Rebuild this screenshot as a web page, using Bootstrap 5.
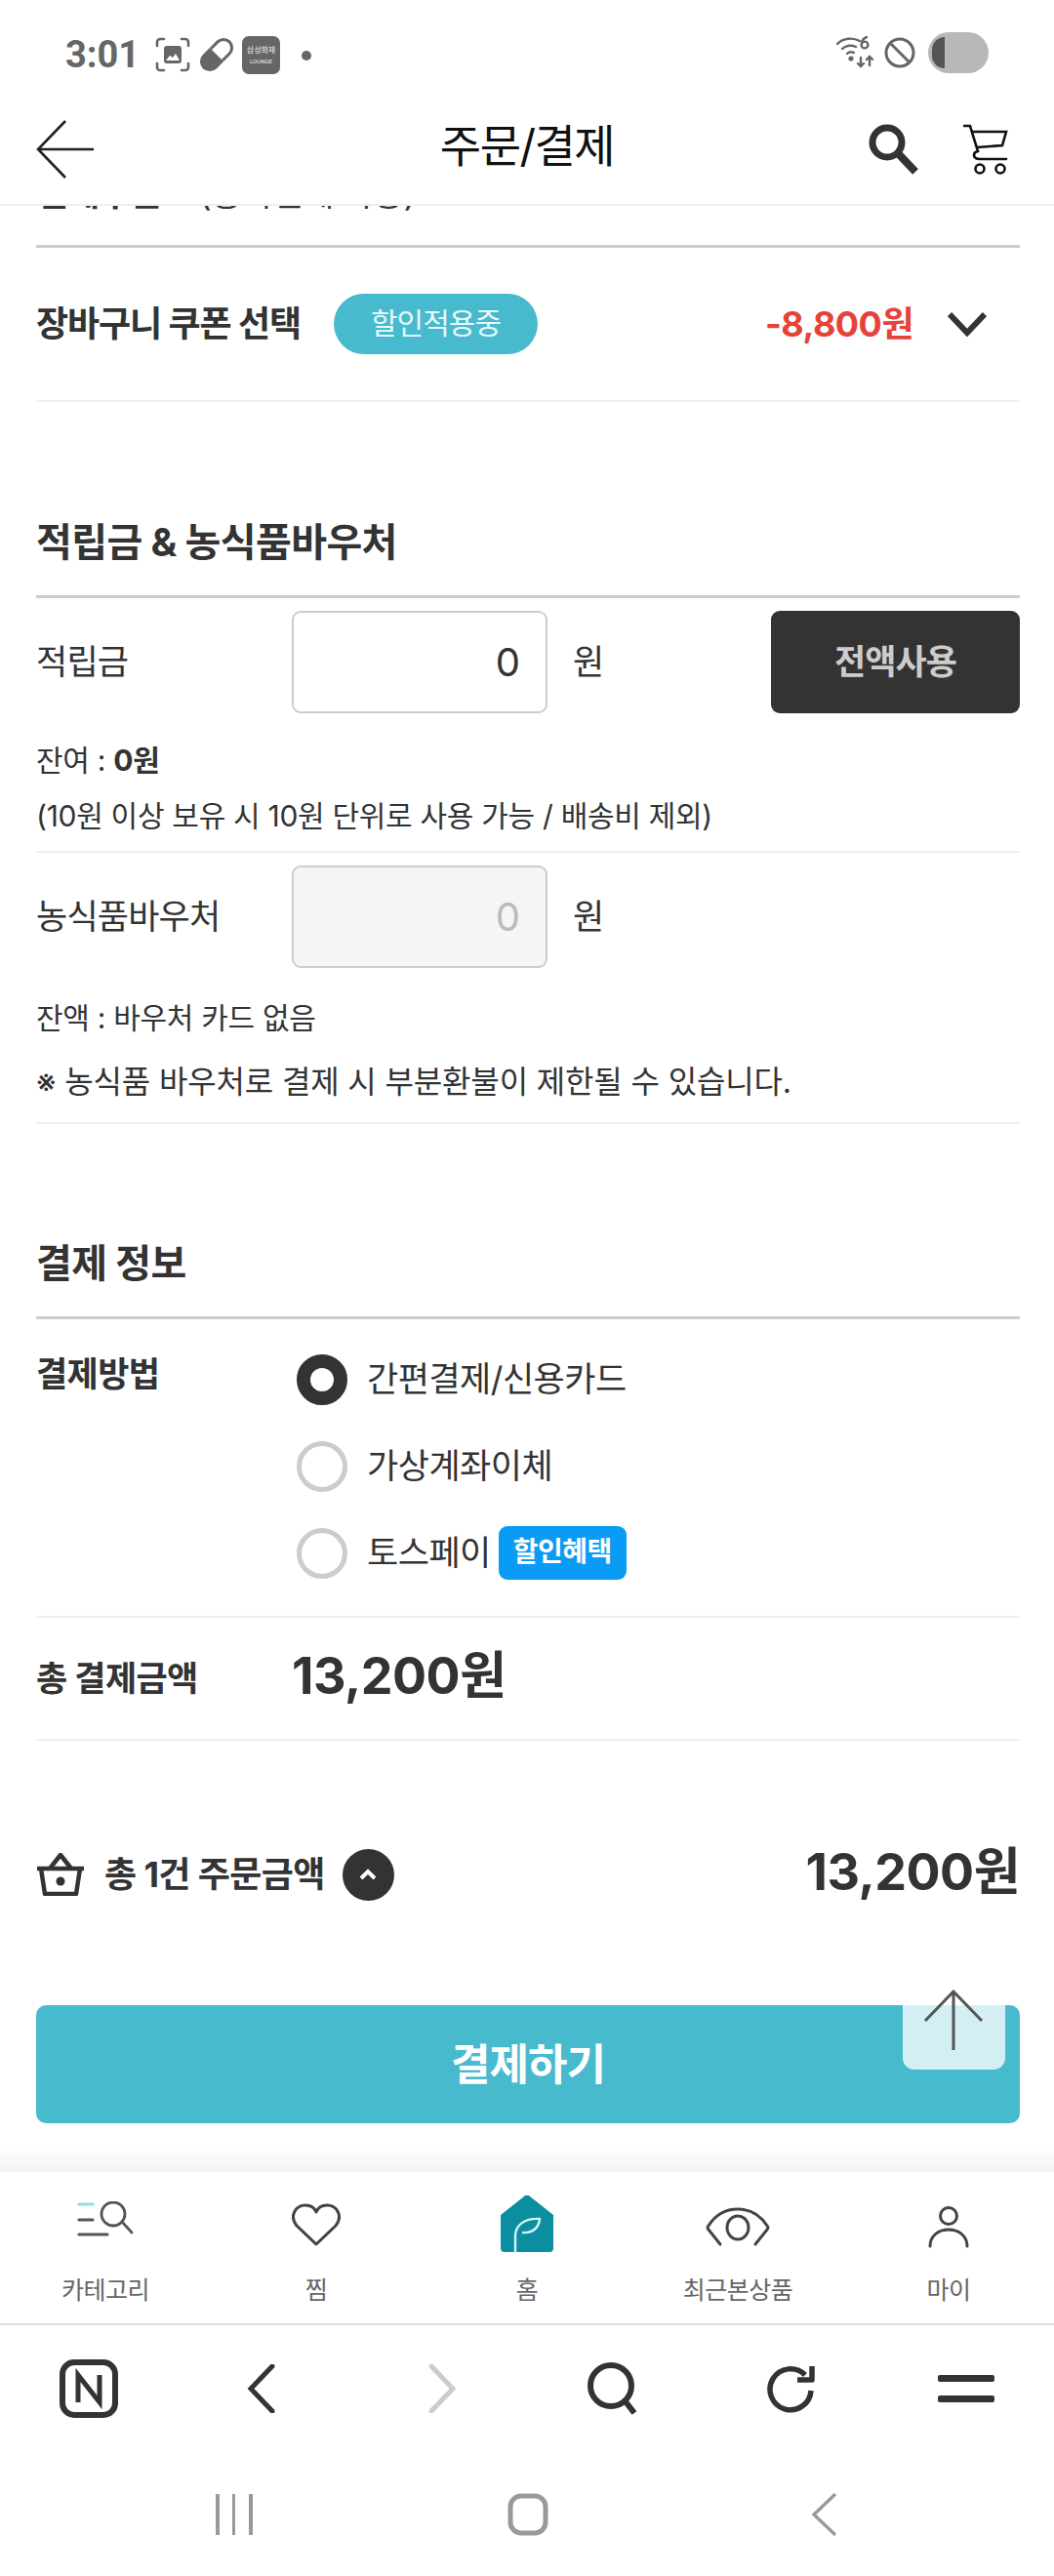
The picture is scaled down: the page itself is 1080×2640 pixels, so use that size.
<!DOCTYPE html>
<html lang="ko">
<head>
    <meta charset="UTF-8">
    <meta name="viewport" content="width=device-width, initial-scale=1.0">
    <title>주문/결제</title>
    <link href="https://cdn.jsdelivr.net/npm/bootstrap@5.3.0/dist/css/bootstrap.min.css" rel="stylesheet">
    <style>
        html, body { height: 2640px; }
        body {
            width: 1080px;
            background: #fff;
            color: #333;
            font-family: Inter, "Noto Sans CJK KR", "Noto Sans", sans-serif;
            font-size: 35px;
            letter-spacing: -.8px;
            overflow: hidden;
        }
        .status-bar { height: 100px; padding: 34px 67px 0 67px; color: #666; }
        .status-time { font-family: Roboto, sans-serif; font-weight: 700; font-size: 38px; line-height: 44px; letter-spacing: 0; width: 88px; }
        .top-head { height: 111px; border-bottom: 2px solid #eee; padding: 0 37px; position: relative; }
        .top-title { position: absolute; left: 0; right: 0; top: 19px; text-align: center; font-size: 46px; line-height: 60px; color: #111; letter-spacing: -1.5px; }
        .main-area { height: 2015px; overflow: hidden; padding: 0 35px 0 37px; position: relative; }
        .cut-head { height: 78px; margin-top: -38px; font-size: 36px; font-weight: 700; line-height: 50px; }
        .cut-head span { font-size: 35px; font-weight: 400; margin-left: 30px; }
        .rule-strong { border-top: 3px solid #ccc; }
        .rule-thin { border-top: 2px solid #eee; }
        .coupon-row { height: 156px; }
        .coupon-title { font-size: 36px; font-weight: 700; width: 305px; line-height: 50px; letter-spacing: -1.1px; }
        .coupon-pill { background: #47bace; color: #e8f8fb; border-radius: 31px; width: 209px; height: 62px; font-size: 30px; line-height: 60px; text-align: center; letter-spacing: -1px; }
        .minus-price { color: #e5433a; font-size: 36px; font-weight: 700; margin-right: 35px; letter-spacing: -.5px; }
        .sec-title { font-size: 40px; font-weight: 700; line-height: 56px; letter-spacing: -.6px; }
        .sec-one { padding-top: 116px; height: 198px; }
        .sec-two { padding-top: 115px; height: 197px; }
        .label-col { width: 262px; flex: none; }
        .field-row { height: 105px; margin-top: 13px; }
        .amount-input.form-control {
            width: 262px; height: 105px; border: 2px solid #ccc; border-radius: 9px;
            text-align: right; font-size: 40px; padding: 0 26px; color: #333; letter-spacing: 0;
            font-family: Inter, "Noto Sans CJK KR", sans-serif; box-shadow: none;
        }
        .amount-input.form-control:disabled { background: #f5f5f5; color: #bbb; opacity: 1; }
        .won-text { margin-left: 26px; }
        .all-btn.btn { width: 255px; height: 105px; margin-left: auto; background: #333; border: 0; border-radius: 9px; color: #ccc; font-size: 35px; font-weight: 700; letter-spacing: -1px; }
        .note-line { font-size: 30px; line-height: 40px; letter-spacing: -.3px; }
        .note-wide { font-size: 32px; margin-top: 26px; letter-spacing: -.15px; }
        .pay-methods { padding-top: 17px; height: 304px; }
        .pay-label { font-size: 35px; font-weight: 700; line-height: 48px; letter-spacing: -.6px; }
        .pay-opt { height: 89px; margin: 0; padding: 0; min-height: 0; }
        .pay-opt .form-check-input {
            width: 52px; height: 52px; margin: 0 20px 0 5px; float: none; flex: none;
            border: 5px solid #ccc; background-image: none; box-shadow: none;
        }
        .pay-opt .form-check-input:checked { border: 14px solid #333; background-color: #fff; background-image: none; }
        .pay-opt .form-check-label { font-size: 35px; letter-spacing: -.5px; opacity: 1; }
        .benefit-tag { background: #0a9bf5; color: #fff; border-radius: 9px; width: 131px; height: 55px; margin-left: 8px; font-size: 28px; font-weight: 700; line-height: 52px; text-align: center; letter-spacing: -.5px; }
        .total-row { height: 124px; }
        .total-big { font-size: 52px; font-weight: 700; letter-spacing: -.5px; line-height: 70px; margin-top: -5px; }
        .order-row { height: 122px; margin-top: 76px; }
        .order-label { font-size: 36px; font-weight: 700; margin: 0 18px 0 20px; letter-spacing: -.6px; }
        .toggle-dot { width: 53px; height: 53px; border-radius: 50%; background: #333; }
        .pay-btn.btn { display: block; width: 100%; height: 121px; margin-top: 73px; background: #47bace; border: 0; border-radius: 10px; color: #fff; font-size: 44px; font-weight: 700; letter-spacing: -1px; }
        .scroll-top { position: absolute; left: 925px; top: 1805px; width: 105px; height: 105px; background: rgba(255,255,255,.77); border-radius: 0 0 12px 12px; }
        .bottom-fade { height: 26px; margin-top: -26px; position: relative; background: linear-gradient(to bottom, rgba(0,0,0,0), rgba(0,0,0,.05)); }
        .tab-bar { height: 157px; border-bottom: 2px solid #ddd; }
        .tab-item { width: 216px; text-align: center; }
        .tab-icon { height: 76px; margin-top: 16px; }
        .tab-text { font-size: 25px; line-height: 34px; color: #666; margin-top: 12px; letter-spacing: -.5px; }
        .browser-bar { height: 130px; }
        .sys-bar { height: 127px; }
        .pos-b { position: absolute; top: 50%; transform: translate(-50%,-50%); }
    </style>
</head>
<body class="d-flex flex-column">
    <div class="status-bar d-flex align-items-start">
        <div class="status-time">3:01</div>
        <svg class="ms-1" width="36" height="36" viewBox="0 0 36 36" fill="none" stroke="#666" stroke-width="2.6" stroke-linecap="round" style="margin-top:4px">
            <path d="M2 9V5a3 3 0 0 1 3-3h4M27 2h4a3 3 0 0 1 3 3v4M34 27v4a3 3 0 0 1-3 3h-4M9 34H5a3 3 0 0 1-3-3v-4"/>
            <rect x="9" y="9" width="18" height="18" rx="3" fill="#666" stroke="none"/>
            <path d="M11 24l4-5 3 2 3-4 4 7z" fill="#fff" stroke="none"/>
        </svg>
        <svg class="ms-2" width="38" height="38" viewBox="0 0 38 38" style="margin-top:3px">
            <g transform="rotate(-45 19 19)"><path d="M19 9H9a10 10 0 0 0 0 20h10z" fill="#666"/><path d="M19 10.500h10a8.500 8.500 0 0 1 0 17H19" fill="none" stroke="#666" stroke-width="3"/></g>
        </svg>
        <div class="d-flex flex-column align-items-center justify-content-center" style="width:39px;height:39px;margin-left:7px;background:#666;border-radius:7px;margin-top:3px;color:#eee;font-size:8px;line-height:11px;letter-spacing:0">
            <span>삼성화재</span><span style="font-size:6px;font-family:Roboto">LOUNGE</span>
        </div>
        <div class="rounded-circle" style="width:10px;height:10px;background:#666;margin:18px 0 0 22px"></div>
        <div class="d-flex align-items-start ms-auto">
            <svg width="42" height="34" viewBox="0 0 40 34" fill="none" stroke="#666" stroke-width="2.4" stroke-linecap="round" style="margin-top:3px">
                <path d="M1 8C7 2 17 1 24 5M6 13c4-4 10-4 14-2M11 18c2-2 5-2 7-1"/><circle cx="15" cy="23" r="1.4" fill="#666"/>
                <circle cx="29" cy="9" r="3.4"/><path d="M26 8c0-4 2-6 5-7M25 22v9m-3-3l3 3 3-3M34 30v-9m-3 3l3-3 3 3"/>
            </svg>
            <svg class="ms-2" width="32" height="32" viewBox="0 0 32 32" fill="none" stroke="#666" stroke-width="3" style="margin-top:4px"><circle cx="16" cy="16" r="14"/><path d="M6 6l20 20"/></svg>
            <div class="d-flex align-items-center" style="width:62px;height:42px;margin-left:13px;background:#b8b8b8;border-radius:21px;margin-top:-1px;padding-left:4px">
                <div style="width:13px;height:32px;background:#555;border-radius:13px 0 0 13px"></div>
            </div>
        </div>
    </div>

    <div class="top-head d-flex align-items-center">
        <svg width="60" height="60" viewBox="0 0 60 60" fill="none" stroke="#222" stroke-width="2.6" style="margin-top:-4px">
            <path d="M30 1L2 30l28 29M2 30h57"/>
        </svg>
        <div class="top-title">주문/결제</div>
        <svg width="56" height="58" viewBox="0 0 56 58" fill="none" stroke="#333" style="position:absolute;left:887px;top:24px">
            <circle cx="22" cy="22" r="15" stroke-width="7"/><path d="M33 33l18 19" stroke-width="8"/>
        </svg>
        <svg width="48" height="52" viewBox="0 0 48 52" fill="none" stroke="#111" stroke-width="2.6" stroke-linecap="round" style="position:absolute;left:987px;top:27px">
            <path d="M1 2h6l8 26c-5 1-6 7 1 8h28M9 8h35l-4 14-26 2"/><circle cx="17" cy="46" r="4.5"/><circle cx="38" cy="46" r="4.5"/>
        </svg>
    </div>

    <div class="main-area">
        <div class="cut-head">결제구분 <span>(중복결제 가능)</span></div>
        <div class="rule-strong"></div>
        <div class="coupon-row d-flex align-items-center">
            <div class="coupon-title">장바구니 쿠폰 선택</div>
            <div class="coupon-pill">할인적용중</div>
            <div class="minus-price ms-auto">-8,800원</div>
            <svg width="40" height="26" viewBox="0 0 40 26" fill="none" stroke="#333" stroke-width="6" style="margin-right:34px"><path d="M2 3l18 19L38 3"/></svg>
        </div>
        <div class="rule-thin"></div>

        <div class="sec-one sec-title">적립금 &amp; 농식품바우처</div>
        <div class="rule-strong"></div>
        <div class="field-row d-flex align-items-center">
            <div class="label-col">적립금</div>
            <input class="form-control amount-input" type="text" value="0">
            <span class="won-text">원</span>
            <button class="btn all-btn" type="button">전액사용</button>
        </div>
        <div class="note-line" style="margin-top:28px">잔여 : <b>0원</b></div>
        <div class="note-line" style="margin-top:17px">(10원 이상 보유 시 10원 단위로 사용 가능 / 배송비 제외)</div>
        <div class="rule-thin" style="margin-top:16px"></div>
        <div class="field-row d-flex align-items-center">
            <div class="label-col">농식품바우처</div>
            <input class="form-control amount-input" type="text" value="0" disabled>
            <span class="won-text">원</span>
        </div>
        <div class="note-line" style="margin-top:31px">잔액 : 바우처 카드 없음</div>
        <div class="note-line note-wide">※ 농식품 바우처로 결제 시 부분환불이 제한될 수 있습니다.</div>
        <div class="rule-thin" style="margin-top:21px"></div>

        <div class="sec-two sec-title">결제 정보</div>
        <div class="rule-strong"></div>
        <div class="pay-methods d-flex">
            <div class="label-col pay-label" style="padding-top:15px">결제방법</div>
            <div>
                <div class="form-check pay-opt d-flex align-items-center">
                    <input class="form-check-input" type="radio" name="payWay" id="pay1" checked>
                    <label class="form-check-label" for="pay1">간편결제/신용카드</label>
                </div>
                <div class="form-check pay-opt d-flex align-items-center">
                    <input class="form-check-input" type="radio" name="payWay" id="pay2">
                    <label class="form-check-label" for="pay2">가상계좌이체</label>
                </div>
                <div class="form-check pay-opt d-flex align-items-center">
                    <input class="form-check-input" type="radio" name="payWay" id="pay3">
                    <label class="form-check-label" for="pay3">토스페이</label>
                    <span class="benefit-tag">할인혜택</span>
                </div>
            </div>
        </div>
        <div class="rule-thin"></div>
        <div class="total-row d-flex align-items-center">
            <div class="label-col pay-label">총 결제금액</div>
            <div class="total-big">13,200원</div>
        </div>
        <div class="rule-thin"></div>

        <div class="order-row d-flex align-items-center">
            <svg width="50" height="44" viewBox="0 0 50 44" fill="none" stroke="#333" stroke-width="4.500" stroke-linejoin="round"><path d="M1 16h48M5 16l4 26h32l4-26M14 16L25 2l11 14"/><circle cx="25" cy="29" r="4.500" fill="#333" stroke="none"/></svg>
            <div class="order-label">총 1건 주문금액</div>
            <div class="toggle-dot d-flex align-items-center justify-content-center">
                <svg width="18" height="12" viewBox="0 0 18 12" fill="none" stroke="#fff" stroke-width="4"><path d="M2 10l7-7 7 7"/></svg>
            </div>
            <div class="total-big ms-auto">13,200원</div>
        </div>
        <button class="btn pay-btn" type="button">결제하기</button>
        <div class="scroll-top"></div>
        <svg class="position-absolute" style="left:946px;top:1828px" width="62" height="62" viewBox="0 0 62 62" fill="none" stroke="#555" stroke-width="3"><path d="M2 32L31 2l29 30M31 2v60"/></svg>
    </div>

    <div class="bottom-fade"></div>
    <div class="tab-bar d-flex">
        <div class="tab-item">
            <div class="tab-icon"><svg width="58" height="44" viewBox="0 0 58 44" fill="none" stroke-width="3.200" stroke="#555" stroke-linecap="round" style="margin-top:14px"><path d="M2 3h14" stroke="#8fdbe6"/><path d="M2 19h14M2 34h29"/><circle cx="37" cy="13" r="12" stroke-width="2.800"/><path d="M46 21l10 11" stroke-width="2.800"/></svg></div>
            <div class="tab-text">카테고리</div>
        </div>
        <div class="tab-item">
            <div class="tab-icon"><svg width="50" height="44" viewBox="0 0 50 44" fill="none" stroke="#444" stroke-width="3" stroke-linejoin="round" style="margin-top:16px"><path d="M25 42L5 23C-3 13 4 2 14 2c5 0 9 2 11 7 2-5 6-7 11-7 10 0 17 11 9 21z"/></svg></div>
            <div class="tab-text">찜</div>
        </div>
        <div class="tab-item">
            <div class="tab-icon"><svg width="54" height="58" viewBox="0 0 54 58" fill="none" style="margin-top:8px"><path d="M24 1a4 4 0 0 1 6 0l24 19v34a4 4 0 0 1-4 4H4a4 4 0 0 1-4-4V20z" fill="#0a8ea0"/><path d="M15 58V42c0-12 10-19 25-18-1 9-7 15-18 14" stroke="#d8f3f7" stroke-width="2.400"/></svg></div>
            <div class="tab-text">홈</div>
        </div>
        <div class="tab-item">
            <div class="tab-icon"><svg width="66" height="40" viewBox="0 0 66 40" fill="none" stroke="#444" stroke-width="3" stroke-linecap="round" style="margin-top:20px"><path d="M15 38L3 23a3 3 0 0 1 0-4C10 8 21 2 33 2s23 6 30 17a3 3 0 0 1 0 4L51 38"/><ellipse cx="33" cy="21" rx="11" ry="12"/></svg></div>
            <div class="tab-text">최근본상품</div>
        </div>
        <div class="tab-item">
            <div class="tab-icon"><svg width="42" height="44" viewBox="0 0 42 44" fill="none" stroke="#444" stroke-width="3" stroke-linecap="round" style="margin-top:18px"><circle cx="21" cy="11" r="8.500"/><path d="M2 42c0-10 8-17 19-17s19 7 19 17"/></svg></div>
            <div class="tab-text">마이</div>
        </div>
    </div>

    <div class="browser-bar position-relative">
        <svg class="pos-b" style="left:91px" width="60" height="60" viewBox="0 0 60 60" fill="none" stroke="#333"><rect x="3" y="3" width="54" height="54" rx="12" stroke-width="6"/><path d="M19 44V16l22 28V16" stroke-width="5"/></svg>
        <svg class="pos-b" style="left:268px" width="30" height="50" viewBox="0 0 30 50" fill="none" stroke="#333" stroke-width="5" stroke-linecap="round"><path d="M26 2L4 25l22 23"/></svg>
        <svg class="pos-b" style="left:453px" width="30" height="50" viewBox="0 0 30 50" fill="none" stroke="#ccc" stroke-width="5" stroke-linecap="round"><path d="M4 2l22 23L4 48"/></svg>
        <svg class="pos-b" style="left:629px" width="54" height="54" viewBox="0 0 54 54" fill="none" stroke="#333" stroke-width="6"><circle cx="24" cy="24" r="21"/><path d="M38 39l10 13"/></svg>
        <svg class="pos-b" style="left:810px" width="52" height="52" viewBox="0 0 52 52" fill="none" stroke="#333" stroke-width="5.500"><path d="M41 12A21 21 0 1 0 47 28"/><path d="M48 3v14H33" stroke-linejoin="round"/></svg>
        <svg class="pos-b" style="left:990px" width="58" height="30" viewBox="0 0 58 30" fill="#333"><rect width="58" height="7" y="1" rx="2"/><rect width="58" height="7" y="22" rx="2"/></svg>
    </div>
    <div class="sys-bar position-relative">
        <svg class="pos-b" style="left:240px" width="40" height="42" viewBox="0 0 40 42" fill="#999"><rect x="1" width="4" height="42"/><rect x="18" width="3" height="42"/><rect x="35" width="4" height="42"/></svg>
        <svg class="pos-b" style="left:541px" width="42" height="44" viewBox="0 0 42 44" fill="none" stroke="#999" stroke-width="5"><rect x="3" y="3" width="36" height="38" rx="11"/></svg>
        <svg class="pos-b" style="left:845px" width="28" height="44" viewBox="0 0 28 44" fill="none" stroke="#999" stroke-width="3.400"><path d="M25 1L3 22l22 21"/></svg>
    </div>
</body>
</html>
